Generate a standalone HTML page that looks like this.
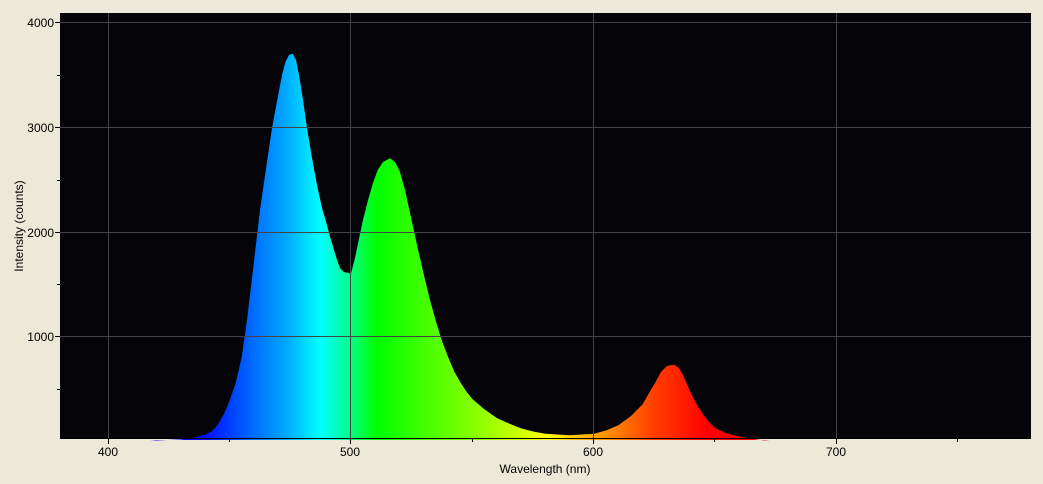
<!DOCTYPE html>
<html><head><style>
html,body{margin:0;padding:0;background:#ece9d8;}
svg{display:block;font-family:"Liberation Sans",sans-serif;}
</style></head><body>
<svg width="1043" height="484" viewBox="0 0 1043 484">
<defs>
<linearGradient id="g" gradientUnits="userSpaceOnUse" x1="150" y1="0" x2="770" y2="0">
<stop offset="0" stop-color="#0000ff"/>
<stop offset="0.09" stop-color="#0010ff"/>
<stop offset="0.17" stop-color="#0070ff"/>
<stop offset="0.22" stop-color="#00aaff"/>
<stop offset="0.275" stop-color="#00ffff"/>
<stop offset="0.32" stop-color="#00ff90"/>
<stop offset="0.365" stop-color="#00ff00"/>
<stop offset="0.56" stop-color="#a8ff00"/>
<stop offset="0.64" stop-color="#ffff00"/>
<stop offset="0.72" stop-color="#ffa000"/>
<stop offset="0.81" stop-color="#ff4000"/>
<stop offset="0.9" stop-color="#ff0000"/>
<stop offset="1" stop-color="#ff0000"/>
</linearGradient>
</defs>
<rect x="60" y="13" width="971" height="426" fill="#050408"/>
<path d="M150,440 L156.6,440.5 L180.9,439.4 L195,437.5 L205.2,434.7 L212,431 L217.4,425.3 L224,414 L229.5,401 L236,382 L241.7,357.2 L247,320 L253.8,263 L260,210 L266,168.8 L272,128 L278.1,95.5 L282,75 L285.4,62 L289,55 L292.7,53.6 L296,60 L299,75 L303,100 L307.3,130 L312,158 L317,185 L322,208 L326.7,224 L331,240 L336.4,258 L340,268 L343.7,272 L351,273.5 L355,258 L358.3,242 L363,220 L368,200.2 L373,183 L377.7,170 L383,162 L389.9,158.3 L395,162 L399.6,170.9 L405,190 L411.8,221.1 L417,245 L423.9,275 L430,300 L436.1,322 L442,341 L448.2,357.2 L454,371 L460.4,382.4 L466,391 L472.5,399.1 L484,409 L496.8,418 L509,423.5 L521.1,428.4 L533,431.5 L545.4,433.7 L569.7,435.2 L594,433.7 L606,430.5 L618.3,425.3 L631,416 L642.6,404.4 L649,393 L654.8,383.4 L661,372 L666.9,366 L674.2,364.6 L679,368 L683,375 L691.2,393.9 L697,405 L703.4,414.8 L709,422 L715.5,428.4 L727,433.5 L739.8,436.8 L764.1,440.5 L770,440 Z" fill="url(#g)"/>
<g stroke="#444" stroke-width="1">
<line x1="108.5" y1="13" x2="108.5" y2="439"/>
<line x1="350.5" y1="13" x2="350.5" y2="439"/>
<line x1="593.5" y1="13" x2="593.5" y2="439"/>
<line x1="836.5" y1="13" x2="836.5" y2="439"/>
<line x1="60" y1="22.5" x2="1031" y2="22.5"/>
<line x1="60" y1="127.5" x2="1031" y2="127.5"/>
<line x1="60" y1="232.5" x2="1031" y2="232.5"/>
<line x1="60" y1="336.5" x2="1031" y2="336.5"/>
</g>
<g stroke="#000" stroke-width="1">
<line x1="60" y1="438.5" x2="1031" y2="438.5"/>
<line x1="108.5" y1="439" x2="108.5" y2="444"/>
<line x1="229.5" y1="439" x2="229.5" y2="442"/>
<line x1="350.5" y1="439" x2="350.5" y2="444"/>
<line x1="472.5" y1="439" x2="472.5" y2="442"/>
<line x1="593.5" y1="439" x2="593.5" y2="444"/>
<line x1="714.5" y1="439" x2="714.5" y2="442"/>
<line x1="836.5" y1="439" x2="836.5" y2="444"/>
<line x1="957.5" y1="439" x2="957.5" y2="442"/>
<line x1="55" y1="22.5" x2="60" y2="22.5"/>
<line x1="57" y1="75.5" x2="60" y2="75.5"/>
<line x1="55" y1="127.5" x2="60" y2="127.5"/>
<line x1="57" y1="180.5" x2="60" y2="180.5"/>
<line x1="55" y1="232.5" x2="60" y2="232.5"/>
<line x1="57" y1="284.5" x2="60" y2="284.5"/>
<line x1="55" y1="336.5" x2="60" y2="336.5"/>
<line x1="57" y1="389.5" x2="60" y2="389.5"/>
</g>
<g font-size="12" fill="#000" text-anchor="end">
<text x="54" y="27">4000</text>
<text x="54" y="132">3000</text>
<text x="54" y="237">2000</text>
<text x="54" y="341">1000</text>
</g>
<g font-size="12" fill="#000" text-anchor="middle">
<text x="108" y="456">400</text>
<text x="350" y="456">500</text>
<text x="593" y="456">600</text>
<text x="836" y="456">700</text>
<text x="545" y="473">Wavelength (nm)</text>
</g>
<text font-size="12" fill="#000" text-anchor="middle" transform="translate(23,226) rotate(-90)">Intensity (counts)</text>
</svg>
</body></html>
